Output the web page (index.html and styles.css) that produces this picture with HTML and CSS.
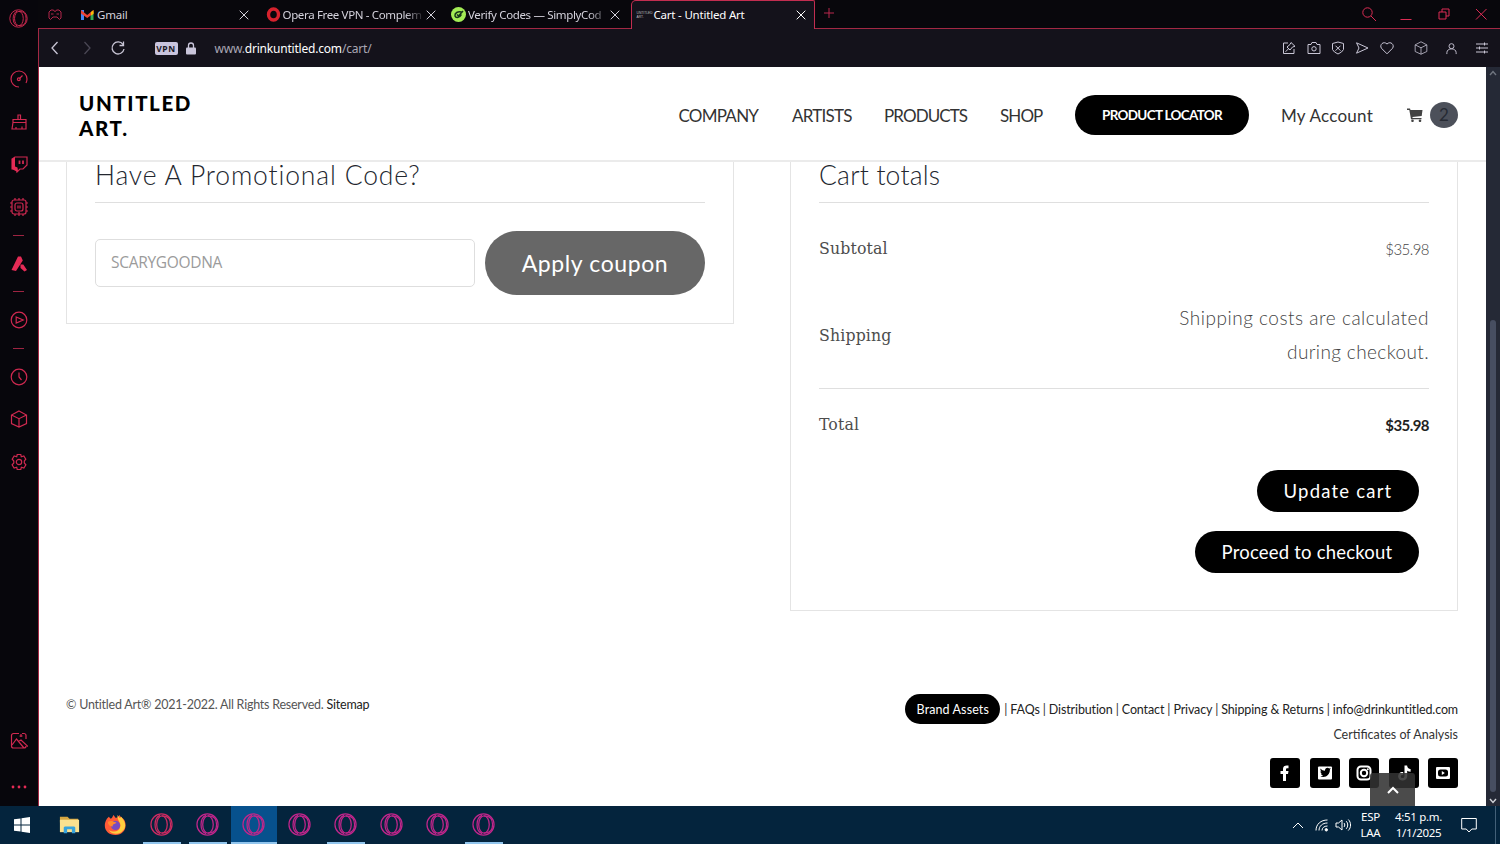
FILE: index.html
```html
<!DOCTYPE html>
<html lang="en">

<head>
    <meta charset="UTF-8">
    <meta name="viewport" content="width=device-width, initial-scale=1.0">
    <title>Cart - Untitled Art</title>
    <link rel="stylesheet" href="styles.css">
</head>

<body>
    <!-- Shared icons -->
    <svg class="defs">
        <symbol id="opera" viewBox="0 0 24 24">
            <circle cx="12" cy="12" r="11"></circle>
            <ellipse cx="12.500" cy="12" rx="5.500" ry="9"></ellipse>
            <path d="M10.500 2.500C3.500 5 3.500 19 10.500 21.500M12.500 3c7 0 9 4 9 9s-2 9-9 9"></path>
        </symbol>
        <symbol id="cube" viewBox="0 0 18 18">
            <path d="M9 1l7.500 4v8.500L9 17l-7.500-3.500V5zM1.500 5L9 8.700 16.500 5M9 8.700V17"></path>
        </symbol>
        <symbol id="close" viewBox="0 0 10 10">
            <path d="M.7.7l8.600 8.600M9.300.7L.7 9.300"></path>
        </symbol>
    </svg>

    <div class="browser">
        <aside class="sidebar">
            <div class="side-logo"><svg class="icon"><use href="#opera"></use></svg></div>
            <div class="side-item"><svg class="icon" viewBox="0 0 18 18"><path d="M9 17a8 8 0 1 1 8-8 9 9 0 0 1-1 4M12.500 5.500L9.500 8.500"></path><circle cx="8.800" cy="9.200" r="1.400"></circle></svg></div>
            <div class="side-item"><svg class="icon" viewBox="0 0 18 18"><path d="M3 6.500h13v3H3zM3 9.500L2 16h14V9.500M8 6.500V2h2.500v4.500M6 16v-2M12 16v-2.500"></path></svg></div>
            <div class="side-item"><svg class="icon" viewBox="0 0 18 18"><path d="M5 2h12v8l-4 4h-3l-3 3v-3H2V4z"></path><path class="fill" d="M5 2v9.500l2.500 1V17L2 14V4z"></path><path d="M9.500 5.500v3.500M13 5.500v3.500" stroke-width="1.800"></path></svg></div>
            <div class="side-item"><svg class="icon" viewBox="0 0 18 18"><rect x="2" y="2" width="14" height="14" rx="2"></rect><rect x="5" y="5" width="8" height="8" rx="2"></rect><path d="M8 7.500v3M10 7.500v3M5 0v2M9 0v2M13 0v2M5 16v2M9 14v4M13 16v2M0 5h2M0 9h2M0 13h2M16 5h2M16 9h2M16 13h2"></path></svg></div>
            <div class="side-dash"></div>
            <div class="side-item"><svg class="icon" viewBox="0 0 18 18"><path class="fill" d="M8 1.500h3l1.800 4L6 16l-4.500-1zM10.500 9.500l2.800 0 3.700 5.500-2.500 1.500-4-3.500z"></path></svg></div>
            <div class="side-dash"></div>
            <div class="side-item"><svg class="icon" viewBox="0 0 18 18"><circle cx="9" cy="9" r="7.800"></circle><path d="M6.200 6l7 3-7 3z"></path></svg></div>
            <div class="side-dash"></div>
            <div class="side-item"><svg class="icon" viewBox="0 0 18 18"><circle cx="9" cy="9" r="7.800"></circle><path d="M9 4.500V9l2.500 3"></path></svg></div>
            <div class="side-item"><svg class="icon"><use href="#cube"></use></svg></div>
            <div class="side-item"><svg class="icon" viewBox="0 0 18 18"><circle cx="9" cy="9" r="2.700"></circle><path d="M7.200 1.500h3.600l.5 2.300 2.500-.8 2 3.200L14.300 8v2l1.600 1.900-2 3.200-2.500-.9-.6 2.300H7.200l-.5-2.300-2.600.9-2-3.200L3.800 10V8L2.200 6.200 4.200 3l2.500.8z"></path></svg></div>
            <div class="side-bottom">
                <svg class="icon" viewBox="0 0 18 18"><path d="M9 1.500H3.500a2 2 0 0 0-2 2v10.500a2 2 0 0 0 2 2H14a2 2 0 0 0 2-2M16 7V3.500a2 2 0 0 0-2-2h-2M2 13l4.500-6 7.500 9M8.500 9.500L11 8l7 6.500M11 2v3M9.500 4h3"></path></svg>
                <svg class="icon" viewBox="0 0 18 18"><g class="fill"><circle cx="3" cy="9" r="1.400"></circle><circle cx="9" cy="9" r="1.400"></circle><circle cx="15" cy="9" r="1.400"></circle></g></svg>
            </div>
        </aside>

        <div class="window">
            <div class="tabs">
                <div class="gx"><svg viewBox="0 0 14 12"><path d="M3 1h2.500l.8 1.300h1.400L8.500 1H11l2 2v6l-1.500 1.500L9 8H5l-2.500 2.500L1 9V3zM3 5h2.500M8.500 5H11"></path></svg></div>
                <div class="tab">
                    <svg class="favicon" viewBox="0 0 15 15"><path fill="#4285f4" d="M1 3h3v10H1z"></path><path fill="#34a853" d="M10.500 5h3v8h-3z"></path><path fill="#ea4335" d="M1 3l6.200 5 6.300-5v3.500L7.200 11 1 6.500z"></path><path fill="#fbbc04" d="M11 5l2.500-2v4L11 8.500z"></path></svg>
                    <span>Gmail</span>
                    <svg class="close"><use href="#close"></use></svg>
                </div>
                <div class="tab">
                    <svg class="favicon" viewBox="0 0 15 15"><ellipse cx="7.500" cy="7.500" rx="5" ry="5.500" fill="none" stroke="#d6222d" stroke-width="3.400"></ellipse></svg>
                    <span class="fade">Opera Free VPN - Complem</span>
                    <svg class="close"><use href="#close"></use></svg>
                </div>
                <div class="tab">
                    <svg class="favicon" viewBox="0 0 15 15"><circle cx="7.500" cy="7.500" r="7.500" fill="#a3ec55"></circle><path d="M10.500 5C7 4 3.500 6 4 9c1 2.500 5 1.500 6.500-1.500M6 7.500l1.500 1.500L12 4" fill="none" stroke="#17361b" stroke-width="1.500"></path></svg>
                    <span class="fade">Verify Codes — SimplyCod</span>
                    <svg class="close"><use href="#close"></use></svg>
                </div>
                <div class="tab active">
                    <div class="favicon mini">UNTITLED<br>ART.</div>
                    <span>Cart - Untitled Art</span>
                    <svg class="close"><use href="#close"></use></svg>
                </div>
                <svg class="plus" viewBox="0 0 12 12"><path d="M6 1v10M1 6h10"></path></svg>
                <div class="window-buttons">
                    <svg viewBox="0 0 16 16"><circle cx="6.500" cy="6.500" r="4.700"></circle><path d="M10 10l5 5"></path></svg>
                    <svg viewBox="0 0 16 16"><path d="M2.500 13.500h11"></path></svg>
                    <svg viewBox="0 0 16 16"><path d="M3 6h7v7H3zM6 6V3h7v7h-3"></path></svg>
                    <svg viewBox="0 0 16 16"><path d="M3 3l10.500 10.500M13.500 3L3 13.500"></path></svg>
                </div>
            </div>

            <div class="toolbar">
                <svg class="nav-icon" viewBox="0 0 16 16"><path d="M10.500 2L5 8l5.500 6"></path></svg>
                <svg class="nav-icon off" viewBox="0 0 16 16"><path d="M5.500 2L11 8l-5.500 6"></path></svg>
                <svg class="nav-icon" viewBox="0 0 16 16"><path d="M13 4.500A6 6 0 1 0 14 9M13.500 1.500v4h-4"></path></svg>
                <span class="vpn">VPN</span>
                <svg class="lock" viewBox="0 0 10 13"><path d="M2.500 6V3.500a2.500 2.500 0 0 1 5 0V6" fill="none" stroke="#c9c5da" stroke-width="1.300"></path><rect y="5.500" width="10" height="7" rx="1" fill="#c9c5da"></rect></svg>
                <div class="url">www.<b>drinkuntitled.com</b>/cart/</div>
                <div class="actions">
                    <svg viewBox="0 0 14 14"><path d="M6 2H1.500v10.500H12V8M9 1.500l4 3.800-2.500.7-2.500 3-3-3 3-2.500zM6.500 7.800L3.500 10.800"></path></svg>
                    <svg viewBox="0 0 14 14"><path d="M1 3.500h3L5 1.500h4l1 2h3v9H1z"></path><circle cx="7" cy="7.800" r="2.200"></circle></svg>
                    <svg viewBox="0 0 14 14"><path d="M1.500 2.500L7 1l5.500 1.500v6L10.500 11 7 13l-3.500-2-2-2.500zM4.500 4.700l5 5M9.500 4.700l-5 5"></path></svg>
                    <svg viewBox="0 0 14 14"><path d="M1.500 1.800L13 7 1.500 12.200 4 7z"></path></svg>
                    <svg viewBox="0 0 14 14"><path d="M7 12.800L1.500 7.300C-1 4 3.500-.5 7 3c3.500-3.500 8 1 5.500 4.300z"></path></svg>
                    <svg class="pack" viewBox="0 0 18 18"><use href="#cube"></use></svg>
                    <svg class="user" viewBox="0 0 14 14"><circle cx="7" cy="4.500" r="2.700"></circle><path d="M2 13v-1.500c0-5.500 10-5.500 10 0V13"></path></svg>
                    <svg class="sliders" viewBox="0 0 14 14"><path d="M1 3h12M1 7h12M1 11h12M9.500 1.500v3M4.500 5.500v3M9.500 9.500v3"></path></svg>
                </div>
            </div>

            <div class="viewport">
                <div class="page">
                    <header class="header">
                        <div class="logo">UNTITLED<br>ART.</div>
                        <nav class="menu">
                            <a class="m-company">COMPANY</a>
                            <a class="m-artists">ARTISTS</a>
                            <a class="m-products">PRODUCTS</a>
                            <a class="m-shop">SHOP</a>
                            <a class="locator">PRODUCT LOCATOR</a>
                            <a class="m-account">My Account</a>
                            <svg class="cart-icon" viewBox="0 0 16 14"><path d="M0 .5h3l.5 1.500H15.500l-.8 6L5.500 9v1h9v1.300H4L2.300 2H0z"></path><circle cx="5.500" cy="12.800" r="1.300"></circle><circle cx="13" cy="12.800" r="1.300"></circle></svg>
                            <span class="count">2</span>
                        </nav>
                    </header>

                    <main class="cart">
                        <section class="card coupon">
                            <h2 class="h-promo">Have A Promotional Code?</h2>
                            <div class="coupon-form">
                                <div class="field">SCARYGOODNA</div>
                                <div class="btn apply">Apply coupon</div>
                            </div>
                        </section>
                        <section class="card totals">
                            <h2 class="h-totals">Cart totals</h2>
                            <div class="row subtotal"><span class="label">Subtotal</span><span class="price">$35.98</span></div>
                            <div class="row shipping"><span class="label">Shipping</span><span class="note">Shipping costs are calculated<br><span class="note-end">during checkout.</span></span></div>
                            <div class="row total"><span class="label">Total</span><span class="price bold">$35.98</span></div>
                            <div class="buttons">
                                <div class="btn update">Update cart</div>
                                <div class="btn proceed">Proceed to checkout</div>
                            </div>
                        </section>
                    </main>

                    <footer class="footer">
                        <div class="copy">© Untitled Art® 2021-2022. All Rights Reserved. <a>Sitemap</a></div>
                        <div class="footer-right">
                            <div class="links"><a class="brand">Brand Assets</a><span>| <a>FAQs</a> | <a>Distribution</a> | <a>Contact</a> | <a>Privacy</a> | <a>Shipping &amp; Returns</a> | <a>info@drinkuntitled.com</a></span></div>
                            <div class="certs">Certificates of Analysis</div>
                            <div class="social">
                                <svg viewBox="0 0 30 30"><path d="M13 23v-7h-2.500v-3H13v-2c0-3 2-4 5.500-3.500v2.700c-2-.2-2.500.2-2.500 1.300V13h2.500l-.5 3h-2v7z"></path></svg>
                                <svg viewBox="0 0 30 30"><rect x="8" y="8.500" width="14" height="13" rx="1"></rect><path class="ink" d="M10.500 10.500c1.300 1.500 2.700 2.200 4.500 2.300-.2-3 2.800-3.800 4.200-2.300l1.500-.4-.8 1.600c0 5-4 8.500-9.600 6.700 1.300 0 2-.3 2.700-.9-1.200-.2-1.800-.8-2.100-1.700h1c-1-.6-1.500-1.500-1.400-2.500l1 .2c-1-1-1.300-2-1-3z"></path></svg>
                                <svg viewBox="0 0 30 30"><rect class="line" x="8.500" y="8.500" width="13" height="13" rx="3.500"></rect><circle class="line" cx="15" cy="15" r="3.200"></circle><circle cx="18.800" cy="11.200" r="1"></circle></svg>
                                <svg viewBox="0 0 30 30"><path d="M15.500 7.500h2.600c.2 2 1.400 3.500 3.500 3.600v2.700c-1.300 0-2.400-.4-3.400-1.100v5.800c-.3 5-8.200 5.500-9 .5-.2-3.200 2-5.200 5-4.900v2.700c-3-.3-3 3.300-.8 3.300 1.500 0 2.100-.9 2.100-2.400z"></path></svg>
                                <svg viewBox="0 0 30 30"><rect x="8" y="9" width="14" height="12" rx="1"></rect><rect class="ink" x="10" y="11.500" width="10" height="7" rx="2.500"></rect><path d="M13.800 13l3 2-3 2z"></path></svg>
                            </div>
                        </div>
                    </footer>

                    <div class="to-top"><svg viewBox="0 0 12 8"><path d="M1 7l5-5 5 5"></path></svg></div>
                </div>
                <div class="scrollbar">
                    <svg viewBox="0 0 8 6"><path d="M1 5l3-3.500L7 5"></path></svg>
                    <div class="thumb"></div>
                    <svg class="down" viewBox="0 0 8 6"><path d="M1 1l3 3.500L7 1"></path></svg>
                </div>
            </div>
        </div>
    </div>

    <div class="taskbar">
        <div class="start"><svg viewBox="0 0 16 16"><path d="M0 2.300l6.500-.9v6.100H0zM7.500 1.200L16 0v7.500H7.500zM0 8.500h6.500v6.100L0 13.700zM7.500 8.500H16V16l-8.500-1.200z"></path></svg></div>
        <div class="task"><svg viewBox="0 0 24 24"><path fill="#d6a742" d="M2 4h8l2 2h9v4H2z"></path><path fill="#fbe18f" d="M2 7h20v13H2z"></path><path fill="#38a4dd" d="M6 21v-6l1-1h10l1 1v6h-3.500v-4h-5v4z"></path></svg></div>
        <div class="task"><svg viewBox="0 0 24 24"><path fill="#ff5b37" d="M3 6l2-2 2 2c2-1 2-3 3-4l2 3c3 0 3-2 4-3 1 2 3 3 4 4l1 1c4 7 0 16-9 16C2 23-2 14 3 6z"></path><path fill="#ffce3e" d="M14 2l2.500 3.500L18 4c5 6 6 12 0 16-5 3-10 2-13-2 6 3 11 1 12-4 1-4-3-5-3-12z"></path><circle cx="12" cy="13" r="4.800" fill="#784bc2"></circle><path fill="#ff8a2e" d="M4 9c2-1 5-1 6 0l3 1c-1 2-4 1-4 4-3 0-5-2-5-5z"></path></svg></div>
        <div class="task open"><svg class="op red"><use href="#opera"></use></svg></div>
        <div class="task open"><svg class="op"><use href="#opera"></use></svg></div>
        <div class="task open current"><svg class="op"><use href="#opera"></use></svg></div>
        <div class="task"><svg class="op"><use href="#opera"></use></svg></div>
        <div class="task open"><svg class="op"><use href="#opera"></use></svg></div>
        <div class="task"><svg class="op"><use href="#opera"></use></svg></div>
        <div class="task"><svg class="op"><use href="#opera"></use></svg></div>
        <div class="task open"><svg class="op"><use href="#opera"></use></svg></div>
        <div class="tray">
            <svg class="up" viewBox="0 0 12 8"><path d="M1 7l5-5 5 5"></path></svg>
            <svg class="wifi" viewBox="0 0 14 14"><path d="M1 12.500C1 6 6 2 12.500 2M4 12.500c0-4.500 3.500-7.500 8.500-7.500M7 12.500c0-2.500 2-4.500 5.500-4.500"></path><circle cx="11.300" cy="11.800" r="1.200" fill="#fff"></circle></svg>
            <svg class="volume" viewBox="0 0 16 14"><path d="M1 5h2.500L7 2v10L3.500 9H1zM9 5c1 1 1 3 0 4M11.200 3.200c2 2 2 5.600 0 7.600M13.300 1.500c3 3 3 8 0 11"></path></svg>
            <div class="lang">ESP<br>LAA</div>
            <div class="clock">4:51 p.m.<br>1/1/2025</div>
            <svg class="notify" viewBox="0 0 16 16"><path d="M.7 1.500h14.600v10.500h-4.500l-2.800 3-2.800-3H.7z"></path></svg>
            <div class="desktop"></div>
        </div>
    </div>
</body>

</html>
```

FILE: styles.css
```css
* {
    box-sizing: border-box;
}

body {
    margin: 0;
    width: 1500px;
    height: 844px;
    overflow: hidden;
    background: #08070c;
    font-family: Lato, "Liberation Sans", sans-serif;
}

svg {
    display: block;
    flex: none;
    fill: none;
    stroke: currentColor;
}

.defs {
    position: absolute;
    width: 0;
    height: 0;
}

.browser {
    display: flex;
    height: 806px;
}

/* Sidebar */
.sidebar {
    display: flex;
    flex-direction: column;
    align-items: center;
    width: 38px;
    padding-right: 1px;
    color: #cf2950;
    background: #07060c;
}

.icon {
    width: 18px;
    height: 18px;
    stroke-width: 1.200;
}

.icon .fill {
    fill: #e52b56;
    stroke: none;
}

.side-logo {
    display: flex;
    align-items: center;
    height: 37px;
    margin-bottom: 21px;
}

.side-logo .icon {
    width: 19px;
    height: 19px;
}

.side-item {
    display: flex;
    align-items: center;
    height: 42.6px;
}

.side-dash {
    width: 11px;
    height: 1px;
    margin: 6.5px 0;
    background: #9e2442;
}

.side-bottom {
    display: flex;
    flex-direction: column;
    gap: 28px;
    margin-top: auto;
    margin-bottom: 10px;
}

/* Tabs */
.window {
    display: flex;
    flex-direction: column;
    width: 1462px;
}

.tabs {
    display: flex;
    height: 28px;
    color: #d4d2dc;
    font: 11.5px "Noto Sans", "Open Sans", sans-serif;
}

.gx {
    width: 36px;
    padding: 9px 0 0 10px;
    color: #b3274a;
}

.gx svg {
    width: 14px;
    height: 12px;
}

.tab {
    display: flex;
    align-items: center;
    width: 185.5px;
    height: 29px;
    padding: 0 11px 0 6px;
}

.tab.active {
    width: 184.5px;
    height: 29px;
    padding: 0 8px 0 5px;
    color: #fff;
    background: #14121b;
    border: 1px solid #c22d50;
    border-bottom: 0;
    border-radius: 5px 2px 0 0;
    z-index: 1;
}

.favicon {
    width: 15px;
    height: 15px;
    margin-right: 2px;
    stroke: none;
}

.mini {
    width: 15px;
    padding-top: 3px;
    color: #bbb;
    font: 3.300px/4px "Liberation Sans", sans-serif;
}

.tab span {
    flex: 1;
    padding-bottom: 1px;
    white-space: nowrap;
    letter-spacing: -.2px;
}

.tab .fade {
    letter-spacing: -.350px;
    -webkit-mask-image: linear-gradient(90deg, #000 88%, transparent 102%);
    mask-image: linear-gradient(90deg, #000 88%, transparent 102%);
}

.close {
    width: 10px;
    height: 10px;
    margin-left: 4px;
}

.plus {
    width: 12px;
    height: 12px;
    margin: 7px 0 0 8px;
    color: #b9294c;
}

.window-buttons {
    display: flex;
    gap: 21.500px;
    margin: 6px 11px 0 auto;
    color: #dc2c54;
}

.window-buttons svg {
    width: 16px;
    height: 16px;
}

/* Address bar */
.toolbar {
    display: flex;
    align-items: center;
    height: 39px;
    padding-left: 8px;
    color: #c9c6d6;
    background: #14121b;
    border-top: 1px solid #a32844;
    border-left: 1px solid #a32844;
}

.nav-icon {
    width: 16px;
    height: 16px;
    margin-right: 15.500px;
    stroke-width: 1.300;
}

.nav-icon.off {
    color: #4a4754;
}

.vpn {
    width: 23px;
    height: 13px;
    margin: 0 8px 0 13px;
    color: #1b1825;
    background: #c9c4dd;
    border-radius: 2px;
    font: bold 8.500px/13px "Noto Sans", sans-serif;
    letter-spacing: .6px;
    text-align: center;
}

.lock {
    width: 10px;
    height: 13px;
    stroke: none;
}

.url {
    margin-left: 19px;
    color: #aaa7b5;
    font: 12px "Noto Sans", "Open Sans", sans-serif;
    letter-spacing: -.2px;
}

.url b {
    color: #fff;
    font-weight: 400;
}

.actions {
    display: flex;
    align-items: center;
    gap: 10.400px;
    margin: 0 11px 0 auto;
}

.actions svg {
    width: 14px;
    height: 14px;
}

.actions .pack {
    margin-left: 9.500px;
}

.actions .user {
    width: 13px;
    height: 15px;
    margin: 0 7px 0 6.500px;
}

/* Page */
.viewport {
    display: flex;
    height: 739px;
}

.page {
    position: relative;
    width: 1448px;
    padding: 0 28px 0 27px;
    background: #fff;
    border-left: 1px solid #a32844;
}

.header {
    display: flex;
    align-items: center;
    justify-content: space-between;
    height: 95px;
    margin: 0 -28px 0 -27px;
    padding: 2px 28px 0 40px;
    border-bottom: 2px solid #ebebeb;
}

.logo {
    padding-top: 2px;
    color: #000;
    font-size: 20.500px;
    font-weight: 900;
    line-height: 25px;
    letter-spacing: 1.600px;
}

.menu {
    display: flex;
    align-items: center;
    padding-top: 1px;
    color: #333;
    font-size: 17px;
    white-space: nowrap;
}

.m-company {
    width: 113.500px;
    letter-spacing: -.75px;
}

.m-artists {
    width: 92px;
    letter-spacing: -.75px;
}

.m-products {
    width: 116px;
    letter-spacing: -.9px;
}

.m-shop {
    width: 75px;
    letter-spacing: -.9px;
}

.locator {
    width: 174px;
    height: 40px;
    margin-right: 32px;
    color: #fff;
    background: #000;
    border-radius: 20px;
    font-size: 13.500px;
    font-weight: bold;
    line-height: 40px;
    letter-spacing: -.7px;
    text-align: center;
}

.m-account {
    width: 126px;
    letter-spacing: .25px;
}

.cart-icon {
    width: 16px;
    height: 14px;
    margin-right: 7px;
    fill: #444;
    stroke: none;
}

.count {
    width: 28px;
    height: 26px;
    color: #262a33;
    background: #4c505a;
    border-radius: 50%;
    font: 17px/26px Lato, sans-serif;
    text-align: center;
}

/* Cart */
.cart {
    display: flex;
    gap: 56px;
    align-items: flex-start;
}

.card {
    width: 668px;
    padding: 0 28px;
    border: 1px solid #e4e4e4;
    border-top: 0;
}

.coupon {
    height: 162px;
}

.totals {
    height: 449px;
}

.card h2 {
    height: 41px;
    margin: 0;
    color: #23272f;
    border-bottom: 1px solid #dfdfdf;
    font-size: 26.500px;
    font-weight: 300;
    line-height: 27px;
    white-space: nowrap;
}

.h-promo {
    letter-spacing: .85px;
}

.h-totals {
    letter-spacing: .2px;
}

.coupon-form {
    display: flex;
    align-items: center;
    justify-content: space-between;
    padding-top: 28px;
}

.field {
    width: 380px;
    height: 48px;
    padding-left: 15px;
    color: #9b9b9b;
    border: 1px solid #dedede;
    border-radius: 5px;
    font: 15.500px/45px "Open Sans", "Noto Sans", sans-serif;
    letter-spacing: -.3px;
}

.btn {
    color: #fff;
    background: #000;
    border-radius: 32px;
    text-align: center;
    white-space: nowrap;
}

.apply {
    width: 220px;
    height: 64px;
    background: #676767;
    font-size: 23px;
    line-height: 64px;
    letter-spacing: .6px;
}

.row {
    display: flex;
    align-items: center;
    justify-content: space-between;
    color: #444;
    font-weight: 300;
}

.label {
    color: #4d4d4d;
    font: 17.500px "DejaVu Serif Condensed", "DejaVu Serif", serif;
    font-stretch: condensed;
    letter-spacing: .15px;
}

.subtotal {
    height: 89px;
}

.shipping {
    height: 97px;
    padding-bottom: 11px;
    border-bottom: 1px solid #dfdfdf;
}

.total {
    height: 70px;
}

.price {
    padding-top: 2px;
    font-size: 15px;
    letter-spacing: -.55px;
}

.bold {
    color: #222;
    font-weight: bold;
}

.note {
    padding-top: 1px;
    font-size: 19px;
    line-height: 34px;
    letter-spacing: .52px;
    text-align: right;
}

.note-end {
    letter-spacing: .38px;
}

.buttons {
    display: flex;
    flex-direction: column;
    align-items: flex-end;
    gap: 19px;
    padding: 11px 10px 0 0;
}

.update,
.proceed {
    width: 162px;
    height: 42px;
    font-size: 18.500px;
    line-height: 42px;
    letter-spacing: 1.200px;
}

.proceed {
    width: 224px;
    letter-spacing: .2px;
}

/* Footer */
.footer {
    display: flex;
    justify-content: space-between;
    padding-top: 83px;
    color: #333;
    font-size: 12.500px;
    white-space: nowrap;
}

.copy {
    padding-top: 3px;
    letter-spacing: -.23px;
    color: #555;
}

.copy a,
.links a {
    color: #222;
}

.links {
    display: flex;
    align-items: center;
    justify-content: flex-end;
    gap: 4px;
    letter-spacing: -.13px;
}

.links .brand {
    width: 95px;
    height: 30px;
    color: #fff;
    background: #000;
    border-radius: 15px;
    line-height: 31px;
    letter-spacing: .1px;
    text-align: center;
}

.certs {
    color: #333;
    line-height: 22px;
    text-align: right;
}

.social {
    display: flex;
    justify-content: flex-end;
    gap: 9.500px;
    padding-top: 12px;
}

.social svg {
    width: 30px;
    height: 30px;
    background: #000;
    border-radius: 3px;
    fill: #fff;
    stroke: none;
}

.social .ink {
    fill: #000;
}

.social .line {
    fill: none;
    stroke: #fff;
    stroke-width: 2;
}

.to-top {
    position: absolute;
    right: 71px;
    bottom: 0;
    display: flex;
    align-items: center;
    justify-content: center;
    width: 45px;
    height: 33px;
    color: #fff;
    background: rgba(50, 50, 50, .88);
    border-radius: 3px 3px 0 0;
}

.to-top svg {
    width: 12px;
    height: 8px;
    stroke-width: 2;
}

.scrollbar {
    display: flex;
    flex-direction: column;
    align-items: center;
    width: 14px;
    padding: 3px 0 2px;
    color: #707580;
    background: #252936;
}

.scrollbar svg {
    width: 8px;
    height: 6px;
    stroke-width: 1.400;
}

.thumb {
    width: 6px;
    height: 472px;
    margin-top: 244px;
    background: #474e61;
    border-radius: 3px;
}

.scrollbar .down {
    margin-top: auto;
    color: #d0d2d8;
}

/* Taskbar */
.taskbar {
    display: flex;
    height: 38px;
    color: #fff;
    background: #04243d;
}

.start {
    width: 47px;
    padding: 11px 0 0 14px;
}

.start svg {
    width: 16px;
    height: 16px;
    fill: #fff;
    stroke: none;
}

.task {
    display: flex;
    justify-content: center;
    width: 46px;
    padding: 7px 1px 0 0;
}

.task svg {
    width: 23px;
    height: 23px;
    stroke: none;
}

.task .op {
    stroke: #c0268b;
    stroke-width: 1.300;
}

.task .red {
    stroke: #cd2b62;
}

.open {
    background: linear-gradient(#91c5ed, #91c5ed) center bottom / 38px 2px no-repeat;
}

.open.current {
    background: linear-gradient(#91c5ed, #91c5ed) center bottom / 46px 2px no-repeat, #07518d;
}

.tray {
    display: flex;
    align-items: center;
    margin-left: auto;
    font: 11.500px/16px "Noto Sans", "Open Sans", sans-serif;
    letter-spacing: -.3px;
    text-align: center;
}

.up {
    width: 12px;
    height: 8px;
    margin-right: 11px;
}

.wifi {
    width: 14px;
    height: 14px;
    margin-right: 6px;
}

.volume {
    width: 16px;
    height: 14px;
}

.lang {
    width: 39px;
}

.clock {
    width: 57px;
}

.notify {
    width: 16px;
    height: 16px;
    margin-left: 14px;
}

.desktop {
    width: 5px;
    height: 38px;
    margin-left: 18px;
    border-left: 1px solid #436078;
}
```
